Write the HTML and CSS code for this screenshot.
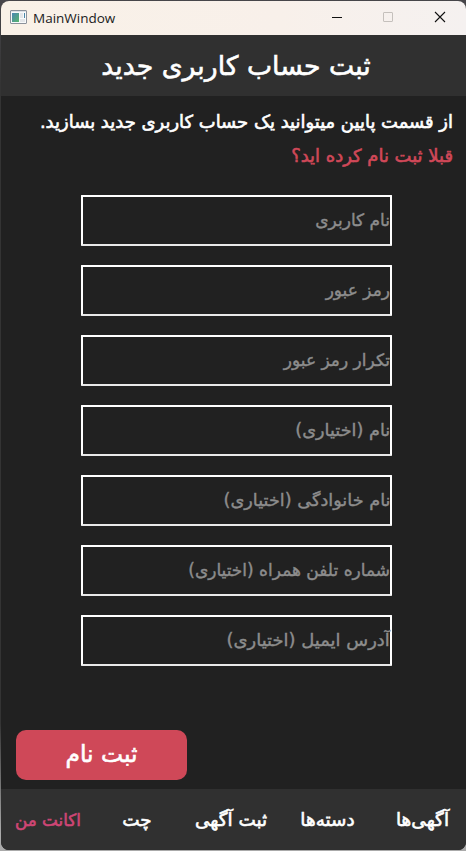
FILE: index.html
```html
<!DOCTYPE html>
<html lang="fa">
<head>
<meta charset="utf-8">
<title>MainWindow</title>
<link rel="stylesheet" href="styles.css">
</head>
<body>
<div class="window">
  <header class="titlebar">
    <svg class="app-icon" width="18" height="15" viewBox="0 0 18 15">
      <defs><linearGradient id="g" x1="0" y1="0" x2="1" y2="1"><stop offset="0" stop-color="#4a87b5"/><stop offset="1" stop-color="#58b56c"/></linearGradient></defs>
      <rect x=".5" y=".5" width="16" height="13" rx=".5" fill="#f8fafb" stroke="#8b929b"/>
      <path d="M1 1.5h15" stroke="#dce0e5"/>
      <rect x="2" y="3" width="7" height="9" fill="url(#g)"/>
      <path d="M10 3h3v5h-3zM10 9h5v3h-5z" fill="#e3e6e9"/>
      <path d="M14.5 3v5" stroke="#4a87a8"/>
    </svg>
    <span class="caption">MainWindow</span>
    <svg class="controls" width="115" height="12" viewBox="0 0 115 12">
      <path d="M0 6.5h10" stroke="#111"/>
      <rect x="51.5" y="1.5" width="9" height="9" rx=".5" fill="none" stroke="#c5c0bc"/>
      <path d="M103 1l10 10M113 1l-10 10" stroke="#111" stroke-width="1.1"/>
    </svg>
  </header>
  <div class="heading"><h1 class="t">ثبت حساب کاربری جدید</h1></div>
  <main dir="rtl">
    <p class="intro"><span class="t">از قسمت پایین میتوانید یک حساب کاربری جدید بسازید.</span></p>
    <p class="login"><span class="t">قبلا ثبت نام کرده اید؟</span></p>
    <form class="fields">
      <div class="field"><span class="t">نام کاربری</span></div>
      <div class="field"><span class="t">رمز عبور</span></div>
      <div class="field"><span class="t">تکرار رمز عبور</span></div>
      <div class="field wide"><span class="t">نام (اختیاری)</span></div>
      <div class="field wide"><span class="t">نام خانوادگی (اختیاری)</span></div>
      <div class="field"><span class="t">شماره تلفن همراه (اختیاری)</span></div>
      <div class="field wider"><span class="t">آدرس ایمیل (اختیاری)</span></div>
    </form>
    <button class="submit" type="button"><span class="t">ثبت نام</span></button>
  </main>
  <nav dir="rtl">
    <a class="tab ads"><span class="t">آگهی‌ها</span></a>
    <a class="tab cats"><span class="t">دسته‌ها</span></a>
    <a class="tab post"><span class="t">ثبت آگهی</span></a>
    <a class="tab chat"><span class="t">چت</span></a>
    <a class="tab account"><span class="t">اکانت من</span></a>
  </nav>
</div>
</body>
</html>
```
FILE: styles.css
```css
* { box-sizing: border-box; }
body { margin: 0; width: 466px; height: 851px; padding: 1px 0 1px 1px; overflow: hidden; background: linear-gradient(#47464a, #343434 10%, #343434 85%, #aaa 98%); font-family: "DejaVu Sans", sans-serif; color: #fff; }
.window { width: 465px; height: 849px; border-radius: 8px; overflow: hidden; background: #212121; display: flex; flex-direction: column; }
.titlebar { height: 34px; flex: none; display: flex; align-items: center; padding-left: 9px; background: linear-gradient(90deg, #f9f1e7, #f8f0ea 60%, #f5f1f0); color: #1b1b1b; }
.app-icon { display: block; margin-top: -2px; }
.caption { font: 13.5px "Open Sans", sans-serif; margin: -1px 0 0 5px; }
.controls { margin: -2px 19px 0 auto; overflow: visible; }
.heading { height: 61px; flex: none; background: #303030; display: flex; align-items: center; justify-content: center; padding-left: 5px; }
h1 { margin: 0; font-size: 26.7px; font-weight: 400; }
.t { display: inline-block; white-space: nowrap; transform-origin: right center; -webkit-text-stroke: .6px currentColor; }
main { flex: 1; display: flex; flex-direction: column; }
p { margin: 0; padding-right: 13px; height: 34px; line-height: 34px; font-size: 17.95px; }
.intro { margin-top: 9px; }
.login { color: #d04858; }
.fields { margin: 22px 74px 0 80px; display: flex; flex-direction: column; gap: 19px; }
.field { height: 51px; width: 311px; border: 2px solid #fff; border-bottom-color: #e8e8e8; border-radius: 1px; display: flex; align-items: center; color: #8d8d8d; font-size: 17px; padding-bottom: 2px; }
.field .t { -webkit-text-stroke-width: .4px; }
.wide .t { transform: scaleX(1.04); }
.wider .t { transform: scaleX(1.055); }
.submit { margin: 64px auto 0 15px; align-self: flex-end; width: 171px; height: 50px; padding: 0 0 2px; border: 0; border-radius: 10px; background: #cf4858; color: #fff; font: 23.4px "DejaVu Sans", sans-serif; }
nav { height: 61px; flex: none; background: #303030; display: grid; grid-template-columns: 87px 103px 90px 98px 87px; align-items: center; justify-items: center; font-size: 18.4px; }
.account { color: #cf4675; font-size: 16.8px; margin-left: 7px; }
```
